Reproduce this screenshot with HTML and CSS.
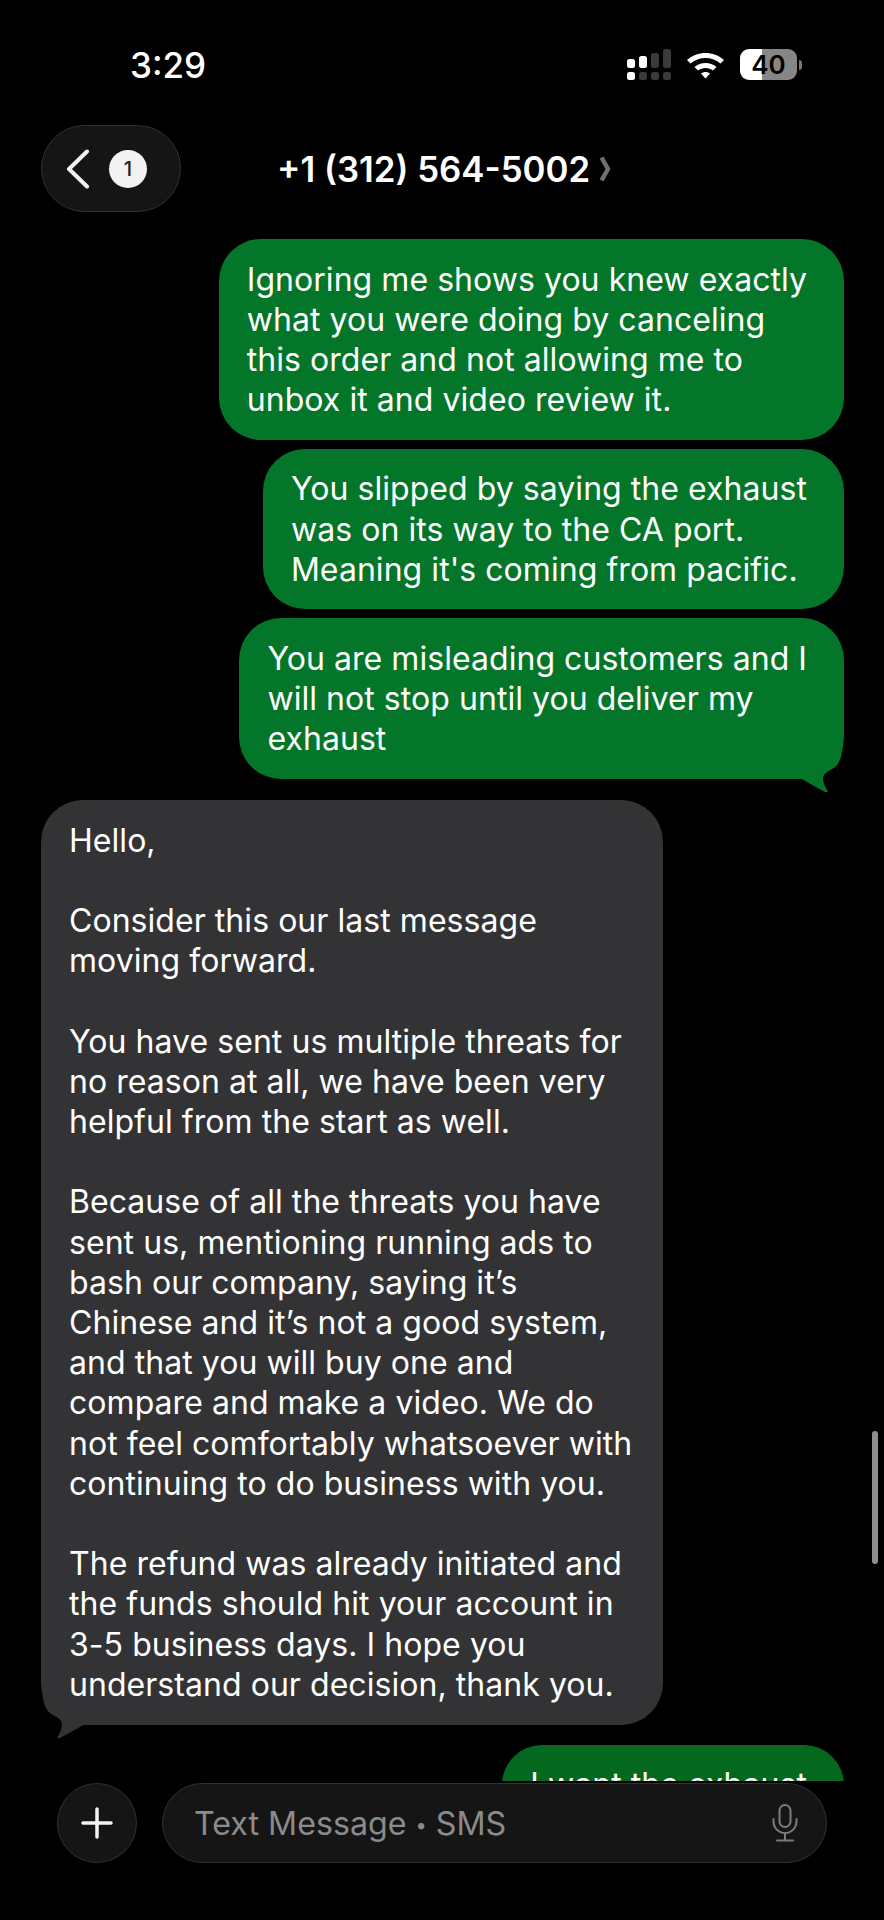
FILE: index.html
```html
<!DOCTYPE html>
<html lang="en">
<head>
<meta charset="utf-8">
<title>Messages</title>
<link rel="stylesheet" href="styles.css">
</head>
<body>
<div class="phone">
  <div class="status">
    <span class="time">3:29</span>
    <div class="status-icons">
      <svg class="signal" width="44" height="31" viewBox="0 0 44 31">
        <rect x="0" y="10" width="8" height="9" rx="2.5" fill="#fff"/>
        <rect x="12" y="7" width="8" height="12" rx="2.5" fill="#fff"/>
        <rect x="24" y="4" width="8" height="15" rx="2.5" fill="#3a3a3a"/>
        <rect x="36" y="0" width="8" height="19" rx="2.5" fill="#3a3a3a"/>
        <rect x="0" y="23" width="8" height="8" rx="2.5" fill="#fff"/>
        <rect x="12" y="23" width="8" height="8" rx="2.5" fill="#3a3a3a"/>
        <rect x="24" y="23" width="8" height="8" rx="2.5" fill="#3a3a3a"/>
        <rect x="36" y="23" width="8" height="8" rx="2.5" fill="#3a3a3a"/>
      </svg>
      <svg class="wifi" width="39" height="29" viewBox="0 0 39 29">
        <path d="M1 10C11 0.500 28 0.500 38 10L34.500 13.500C26.500 6 12.500 6 4.500 13.500Z" fill="#fff"/>
        <path d="M8.500 17C14.500 11.500 24.500 11.500 30.500 17L27 20.500C23 17 16 17 12 20.500Z" fill="#fff"/>
        <path d="M15 23.500C17.500 21.500 21.500 21.500 24 23.500L19.500 28.500Z" fill="#fff"/>
      </svg>
      <div class="battery-wrap">
        <span class="battery">40</span>
        <span class="nub"></span>
      </div>
    </div>
  </div>

  <header class="nav">
    <div class="back">
      <svg class="chev" width="24" height="40" viewBox="0 0 24 40">
        <path d="M21 2.500L3 20L21 37.500" fill="none" stroke="#f2f2f2" stroke-width="4" stroke-linecap="round" stroke-linejoin="round"/>
      </svg>
      <span class="count">1</span>
    </div>
    <div class="title">
      <span>+1 (312) 564-5002</span>
      <svg class="title-chev" width="12" height="26" viewBox="0 0 12 26">
        <path d="M2.500 1.500L9 13L2.500 24.500" fill="none" stroke="#6e6e6e" stroke-width="4.500" stroke-linejoin="round"/>
      </svg>
    </div>
  </header>

  <main class="thread">
    <div class="bubble out">Ignoring me shows you knew exactly<br>what you were doing by canceling<br>this order and not allowing me to<br>unbox it and video review it.</div>
    <div class="bubble out">You slipped by saying the exhaust<br>was on its way to the CA port.<br>Meaning it's coming from pacific.</div>
    <div class="bubble out tailed">You are misleading customers and I<br>will not stop until you deliver my<br>exhaust
      <svg class="tail tail-out" width="50" height="60" viewBox="0 0 50 60"><path d="M48 0C48 20 45 29 37 33C31 36 28 39 28 42C28 47 30 51 32.500 54.500C33 56 32 56.800 30 56C22 52 14 47 7 43L7 0Z" fill="#04762a"/></svg>
    </div>
    <div class="bubble in tailed">Hello,<br><br>Consider this our last message<br>moving forward.<br><br>You have sent us multiple threats for<br>no reason at all, we have been very<br>helpful from the start as well.<br><br>Because of all the threats you have<br>sent us, mentioning running ads to<br>bash our company, saying it’s<br>Chinese and it’s not a good system,<br>and that you will buy one and<br>compare and make a video. We do<br>not feel comfortably whatsoever with<br>continuing to do business with you.<br><br>The refund was already initiated and<br>the funds should hit your account in<br>3-5 business days. I hope you<br>understand our decision, thank you.
      <svg class="tail tail-in" width="50" height="60" viewBox="0 0 50 60"><path d="M48 0C48 20 45 29 37 33C31 36 28 39 28 42C28 47 30 51 32.500 54.500C33 56 32 56.800 30 56C22 52 14 47 7 43L7 0Z" fill="#333335"/></svg>
    </div>
    <div class="bubble out last">I want the exhaust</div>
  </main>

  <footer class="composer">
    <div class="plus">
      <svg width="32" height="32" viewBox="0 0 32 32"><path d="M16 2V30M2 16H30" stroke="#f4f4f4" stroke-width="3.500" stroke-linecap="round"/></svg>
    </div>
    <div class="field">
      <span class="placeholder">Text Message <span class="dot">•</span> SMS</span>
      <svg class="mic" width="26" height="38" viewBox="0 0 26 38">
        <rect x="7.500" y="1" width="11" height="22" rx="5.500" fill="none" stroke="#7c7c7c" stroke-width="2"/>
        <path d="M1.500 15V17C1.500 24 6.500 29 13 29C19.500 29 24.500 24 24.500 17V15M13 29V36M5 36.500H21" fill="none" stroke="#7c7c7c" stroke-width="2" stroke-linecap="round"/>
      </svg>
    </div>
  </footer>

  <div class="scrollbar"></div>
</div>
</body>
</html>
```
FILE: styles.css
```css
* { box-sizing: border-box; }
html, body { margin: 0; background: #000; }
.phone {
  position: relative;
  width: 884px;
  height: 1920px;
  overflow: hidden;
  background: #000;
  color: #fff;
  font-family: Inter, "Liberation Sans", sans-serif;
  display: flex;
  flex-direction: column;
}

.status {
  height: 125px;
  padding: 49px 82px 0 130px;
  display: flex;
  justify-content: space-between;
  align-items: flex-start;
  flex: none;
}
.time { font-size: 35px; line-height: 33px; font-weight: 500; }
.status-icons { display: flex; align-items: center; }
.signal { margin-right: 15px; }
.wifi { margin-right: 15px; }
.battery-wrap { display: flex; align-items: center; }
.battery {
  width: 57px;
  height: 31px;
  border-radius: 9px;
  background: linear-gradient(90deg, #fff 0 39%, #868686 39% 100%);
  color: #000;
  font-size: 26px;
  line-height: 31px;
  font-weight: 600;
  text-align: center;
}
.nub {
  width: 3px;
  height: 10px;
  margin-left: 2px;
  background: #777;
  border-radius: 0 3px 3px 0;
}

.nav {
  flex: none;
  height: 87px;
  padding-left: 41px;
  display: flex;
  align-items: center;
}
.back {
  width: 140px;
  height: 87px;
  border-radius: 44px;
  background: #151515;
  border: 1.500px solid #303030;
  display: flex;
  align-items: center;
  padding-left: 24px;
  gap: 19px;
}
.chev { flex: none; }
.count {
  width: 38px;
  height: 38px;
  border-radius: 50%;
  background: #f2f2f2;
  color: #222;
  font-size: 20px;
  font-weight: 500;
  line-height: 38px;
  text-align: center;
}
.title {
  margin-left: 96px;
  display: flex;
  align-items: center;
  gap: 9px;
  font-size: 34.800px;
  font-weight: 600;
}

.thread {
  flex: 1;
  min-height: 0;
  margin-top: 27px;
  overflow: hidden;
  isolation: isolate;
  display: flex;
  flex-direction: column;
  gap: 9px;
  padding: 0 40px;
}
.bubble {
  position: relative;
  flex: none;
  padding: 20.500px 37px 19.500px 28px;
  border-radius: 42px;
  font-size: 32px;
  letter-spacing: 0.05px;
  line-height: 40.200px;
  white-space: nowrap;
  width: fit-content;
}
.out { align-self: flex-end; background: #04762a; }
.in {
  align-self: flex-start;
  background: #333335;
  margin-top: 12px;
  margin-left: 1px;
  padding-right: 31px;
}
.last { background: #05681f; margin-top: 11px; }
.tail { position: absolute; bottom: -17px; z-index: -1; }
.tail-out { right: -1px; }
.tail-in { left: -1px; transform: scaleX(-1); }

.composer {
  flex: none;
  height: 137px;
  margin-top: 2px;
  padding: 0 57px 57px;
  display: flex;
  gap: 25px;
}
.plus {
  flex: none;
  width: 80px;
  height: 80px;
  border-radius: 50%;
  background: #151515;
  border: 1.500px solid #303030;
  display: flex;
  align-items: center;
  justify-content: center;
}
.field {
  width: 666px;
  height: 80px;
  border-radius: 40px;
  background: #151515;
  border: 1.500px solid #303030;
  padding: 0 28px 0 31px;
  display: flex;
  align-items: center;
  justify-content: space-between;
}
.placeholder { font-size: 32.200px; color: #8b8b8b; }
.dot { font-size: 20px; vertical-align: 3px; }

.scrollbar {
  position: absolute;
  left: 872px;
  top: 1431px;
  width: 6px;
  height: 133px;
  border-radius: 3px;
  background: #8e8e8e;
}
```
